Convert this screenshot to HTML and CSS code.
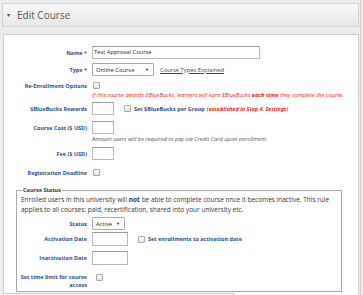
FILE: index.html
```html
<!DOCTYPE html>
<html lang="en">
<head>
  <meta charset="UTF-8">
  <meta name="viewport" content="width=device-width, initial-scale=1.0">
  <title>Edit Course</title>
  <link rel="stylesheet" href="styles.css">
</head>
<body>
  <div class="page">
    <div class="header">
      <span class="caret">&#9662;</span>
      <h1>Edit Course</h1>
    </div>

    <div class="panel">
      <div class="row row-name">
        <label class="label">Name <span class="req">*</span></label>
        <div class="input input-wide">Test Approval Course</div>
      </div>

      <div class="row row-type">
        <label class="label">Type <span class="req">*</span></label>
        <div class="select select-type">Online Course <span class="arrow">&#9660;</span></div>
        <a class="link" href="#">Course Types Explained</a>
      </div>

      <div class="row row-check">
        <label class="label">Re-Enrollment Options</label>
        <span class="check"></span>
      </div>
      <p class="note note-red">If this course awards $BlueBucks, learners will earn $BlueBucks <b>each time</b> they complete the course.</p>

      <div class="row row-bucks">
        <label class="label">$BlueBucks Rewards</label>
        <div class="input input-small"></div>
        <span class="check check-inline"></span>
        <span class="inline-label">Set $BlueBucks per Group</span>
        <span class="warn">(established in Step 4. Settings)</span>
      </div>

      <div class="row row-cost">
        <label class="label">Course Cost ($ USD)</label>
        <div class="input input-small"></div>
      </div>
      <p class="note note-gray">Amount users will be required to pay via Credit Card upon enrollment.</p>

      <div class="row row-fee">
        <label class="label">Fee ($ USD)</label>
        <div class="input input-small"></div>
      </div>

      <div class="row row-deadline">
        <label class="label">Registration Deadline</label>
        <span class="check"></span>
      </div>

      <fieldset class="status">
        <legend>Course Status</legend>
        <p class="status-text">Enrolled users in this university will <b>not</b> be able to complete course once it becomes inactive. This rule applies to all courses: paid, recertification, shared into your university etc.</p>

        <div class="row row-status">
          <label class="label">Status</label>
          <div class="select select-status">Active <span class="arrow">&#9660;</span></div>
        </div>

        <div class="row row-date">
          <label class="label">Activation Date</label>
          <div class="input input-date"></div>
          <span class="check check-inline"></span>
          <span class="inline-label">Set enrollments to activation date</span>
        </div>

        <div class="row row-date2">
          <label class="label">Inactivation Date</label>
          <div class="input input-date"></div>
        </div>

        <div class="row row-limit">
          <label class="label">Set time limit for course access</label>
          <span class="check check-limit"></span>
        </div>
      </fieldset>

      <div class="next"></div>
    </div>
  </div>
</body>
</html>
```

FILE: styles.css
```css
body {
  margin: 0;
  background-color: #ececec;
  font-family: 'Open Sans', 'Liberation Sans', sans-serif;
  color: #333;
  overflow: hidden;
}

.page {
  width: 358px;
  height: 295px;
  padding: 3px 0 0 2px;
  border-right: 1px solid #d0d0d0;
}

.header {
  display: flex;
  align-items: center;
  height: 22px;
  border: 1px solid #d2d2d2;
  background: linear-gradient(#f8f8f8, #e7e7e7);
  margin-right: 1px;
}

.caret {
  font-size: 6px;
  color: #444;
  margin: 0 7px 0 4px;
}

.header h1 {
  margin: 0;
  font-size: 10px;
  font-weight: normal;
  color: #555;
}

.panel {
  margin: 7px 1px 0 1px;
  height: 300px;
  background: #fff;
  border: 1px solid #cfcfcf;
  padding-top: 11px;
}

.row {
  display: flex;
  align-items: center;
}

.label {
  width: 83px;
  padding-right: 5px;
  flex-shrink: 0;
  text-align: right;
  font-size: 5.5px;
  font-weight: bold;
  color: #2c4f85;
  line-height: 8px;
}

.req {
  color: #e22;
}

.input {
  height: 11px;
  border: 1px solid #b8b8b8;
  border-top-color: #999;
  background: #fff;
  font-size: 5.8px;
  line-height: 11px;
  padding-left: 1px;
  color: #222;
}

.input-wide { width: 165px; }
.input-small { width: 19px; }
.input-date { width: 33px; height: 12px; }

.select {
  display: flex;
  justify-content: space-between;
  align-items: center;
  height: 11px;
  border: 1px solid #aaa;
  border-radius: 1px;
  font-size: 5.8px;
  padding: 0 4px 0 3px;
  color: #222;
  background: #fff;
}

.select-type { width: 53px; }
.select-status { width: 24px; }

.arrow {
  font-size: 4px;
  color: #111;
}

.link {
  margin-left: 6px;
  font-size: 5.8px;
  color: #444;
}

.check {
  width: 5px;
  height: 5px;
  margin-left: 1px;
  border: 1px solid #a8a8a8;
  border-radius: 1px;
  background: linear-gradient(#fff, #e4e4e4);
}

.check-inline {
  margin-left: 10px;
  margin-right: 3px;
}

.inline-label {
  font-size: 5.5px;
  font-weight: bold;
  color: #2c4f85;
}

.warn {
  margin-left: 2px;
  font-size: 5.5px;
  font-weight: bold;
  font-style: italic;
  color: #e22;
}

.note {
  margin: 0 0 0 88px;
  font-size: 5.7px;
  font-style: italic;
  line-height: 9px;
}

.note-red { color: #e82020; }
.note-gray { color: #555; }

.row-name { margin-top: 0; }
.row-type { margin-top: 4px; }
.row-check { margin-top: 5px; height: 9px; }
.note-red { margin-top: 1px; }
.row-bucks { margin-top: 2px; }
.row-cost { margin-top: 6px; }
.note-gray { margin-top: 1px; }
.row-fee { margin-top: 3px; }
.row-deadline { margin-top: 8px; height: 9px; }

.status {
  margin: 9px 0 0 12px;
  width: 320px;
  padding: 0 0 2px 4px;
  border: 1px solid #a6a6a6;
}

.status legend {
  padding: 0 1px;
  margin-left: 1px;
  font-size: 5.5px;
  font-weight: bold;
  color: #333;
}

.status-text {
  margin: 1px 0 0 0;
  font-size: 6.5px;
  line-height: 10px;
  color: #333;
}

.status .label {
  width: 68px;
  margin-left: -2px;
}

.row-status { margin-top: 2px; }
.row-date { margin-top: 2px; }
.row-date2 { margin-top: 5px; }
.row-limit { margin-top: 8px; align-items: flex-start; }

.check-limit {
  margin-left: 4px;
  margin-top: 1px;
}

.next {
  margin-top: 1px;
  width: 229px;
  height: 6px;
  border-top: 1px solid #c8c8c8;
  border-right: 1px solid #c8c8c8;
}
```
